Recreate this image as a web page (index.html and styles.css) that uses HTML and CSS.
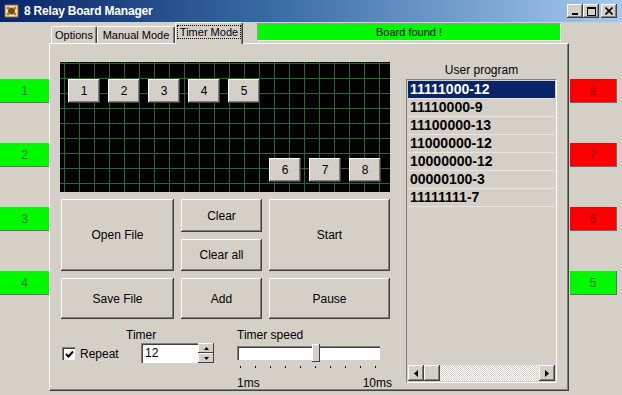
FILE: index.html
```html
<!DOCTYPE html>
<html lang="en">
<head>
    <meta charset="UTF-8">
    <title>8 Relay Board Manager</title>
    <link rel="stylesheet" href="styles.css">
</head>
<body>
<div class="window">
    <div class="titlebar">
        <svg class="app-icon" width="16" height="16" viewBox="0 0 16 16">
            <rect x="1" y="2" width="13" height="12" fill="#f4e6b8" stroke="#8a6a2a"/>
            <circle cx="7.5" cy="8" r="3.5" fill="#7a4a14"/>
            <circle cx="4" cy="5" r="1.5" fill="#b07a30"/>
            <circle cx="11" cy="5" r="1.5" fill="#b07a30"/>
            <circle cx="4" cy="11" r="1.5" fill="#b07a30"/>
            <circle cx="11" cy="11" r="1.5" fill="#b07a30"/>
        </svg>
        <span class="title">8 Relay Board Manager</span>
        <div class="caption-btns">
            <div class="cap"><svg width="8" height="8" viewBox="0 0 8 8"><rect x="1" y="6" width="6" height="2" fill="#000"/></svg></div>
            <div class="cap"><svg width="9" height="9" viewBox="0 0 9 9"><rect x="0.5" y="0.5" width="8" height="8" fill="none" stroke="#000"/><rect x="0" y="0" width="9" height="2" fill="#000"/></svg></div>
            <div class="cap close"><svg width="8" height="8" viewBox="0 0 8 8"><path d="M0.5 0.5 L7.5 7.5 M7.5 0.5 L0.5 7.5" stroke="#000" stroke-width="1.6"/></svg></div>
        </div>
    </div>

    <div class="main">
        <div class="relays left">
            <div class="relay on">1</div>
            <div class="relay on">2</div>
            <div class="relay on">3</div>
            <div class="relay on">4</div>
        </div>

        <div class="tabctl">
            <div class="tabrow">
                <div class="tab t-options">Options</div>
                <div class="tab t-manual">Manual Mode</div>
                <div class="tab active"><span class="focus">Timer Mode</span></div>
                <div class="status">Board found !</div>
            </div>
            <div class="panel">
                <div class="work">
                    <div class="board">
                        <div class="board-row">
                            <div class="btn bbtn">1</div>
                            <div class="btn bbtn">2</div>
                            <div class="btn bbtn">3</div>
                            <div class="btn bbtn">4</div>
                            <div class="btn bbtn">5</div>
                        </div>
                        <div class="board-row end">
                            <div class="btn bbtn">6</div>
                            <div class="btn bbtn">7</div>
                            <div class="btn bbtn">8</div>
                        </div>
                    </div>

                    <div class="actions">
                        <div class="btn open">Open File</div>
                        <div class="btn">Clear</div>
                        <div class="btn start">Start</div>
                        <div class="btn">Clear all</div>
                        <div class="btn">Save File</div>
                        <div class="btn">Add</div>
                        <div class="btn">Pause</div>
                    </div>

                    <div class="timer">
                        <div class="repeat">
                            <div class="check">
                                <svg width="9" height="9" viewBox="0 0 9 9"><path d="M1 4 L3.5 6.5 L8 1.5" fill="none" stroke="#000" stroke-width="2"/></svg>
                            </div>
                            <span>Repeat</span>
                        </div>
                        <div class="timer-val">
                            <div class="lbl">Timer</div>
                            <div class="spin">
                                <div class="spin-input">12</div>
                                <div class="spin-btns">
                                    <div class="sbtn"><svg width="5" height="3" viewBox="0 0 5 3"><path d="M0 3 L2.5 0 L5 3Z" fill="#000"/></svg></div>
                                    <div class="sbtn"><svg width="5" height="3" viewBox="0 0 5 3"><path d="M0 0 L2.5 3 L5 0Z" fill="#000"/></svg></div>
                                </div>
                            </div>
                        </div>
                        <div class="speed">
                            <div class="lbl">Timer speed</div>
                            <div class="slider">
                                <div class="track"></div>
                                <div class="thumb"></div>
                            </div>
                            <div class="ticks"></div>
                            <div class="scale"><span>1ms</span><span>10ms</span></div>
                        </div>
                    </div>
                </div>

                <div class="program">
                    <div class="prog-label">User program</div>
                    <div class="listbox">
                        <div class="items">
                            <div class="item selected">11111000-12</div>
                            <div class="item">11110000-9</div>
                            <div class="item">11100000-13</div>
                            <div class="item">11000000-12</div>
                            <div class="item">10000000-12</div>
                            <div class="item">00000100-3</div>
                            <div class="item">11111111-7</div>
                        </div>
                        <div class="hscroll">
                            <div class="sb-btn"><svg width="4" height="7" viewBox="0 0 4 7"><path d="M4 0 L0 3.5 L4 7Z" fill="#000"/></svg></div>
                            <div class="sb-btn thumb-h"></div>
                            <div class="sb-track"></div>
                            <div class="sb-btn"><svg width="4" height="7" viewBox="0 0 4 7"><path d="M0 0 L4 3.5 L0 7Z" fill="#000"/></svg></div>
                        </div>
                    </div>
                </div>
            </div>
        </div>

        <div class="relays right">
            <div class="relay off">8</div>
            <div class="relay off">7</div>
            <div class="relay off">6</div>
            <div class="relay on">5</div>
        </div>
    </div>
</div>
</body>
</html>
```

FILE: styles.css
```css
body {
    margin: 0;
    background-color: #d4d0c8;
    font-family: "Liberation Sans", Arial, sans-serif;
    font-size: 11px;
    color: #000;
}
.window {
    width: 622px;
    height: 395px;
    overflow: hidden;
    background-color: #d4d0c8;
}
.titlebar {
    height: 22px;
    display: flex;
    align-items: center;
    padding-left: 4px;
    background: linear-gradient(to right, #0a246a, #3a6ea5 45%, #a6caf0);
}
.app-icon {
    flex: none;
}
.title {
    margin-left: 4px;
    color: #fff;
    font-weight: bold;
    font-size: 12px;
    letter-spacing: -0.2px;
}
.caption-btns {
    margin-left: auto;
    margin-right: 5px;
    display: flex;
}
.cap {
    width: 16px;
    height: 14px;
    display: flex;
    align-items: center;
    justify-content: center;
    background-color: #d4d0c8;
    box-shadow: inset -1px -1px #404040, inset 1px 1px #fff, inset -2px -2px #808080;
}
.cap.close {
    margin-left: 2px;
}

.main {
    display: flex;
    height: 373px;
}
.relays {
    display: flex;
    flex-direction: column;
    gap: 40px;
    padding-top: 57px;
}
.relays.left {
    width: 49px;
}
.relays.right {
    width: 52px;
    padding-left: 1px;
}
.relay {
    height: 24px;
    line-height: 24px;
    text-align: center;
    font-size: 12px;
    box-sizing: border-box;
    border-right: 1px solid #6c6c6c;
    border-bottom: 1px solid #6c6c6c;
}
.relays.left .relay {
    width: 50px;
}
.relays.right .relay {
    width: 47px;
}
.relay.on {
    background-color: #00f800;
    color: #1b7a1b;
}
.relay.off {
    background-color: #fa0000;
    color: #9a0000;
}

.tabctl {
    width: 520px;
    position: relative;
}
.tabrow {
    height: 21px;
    display: flex;
    align-items: flex-end;
    padding-left: 2px;
}
.tab {
    height: 17px;
    box-sizing: border-box;
    padding-top: 2px;
    text-align: center;
    border-top: 1px solid #fff;
    border-left: 1px solid #fff;
    border-right: 1px solid #404040;
    box-shadow: inset -1px 0 #808080;
    border-radius: 2px 2px 0 0;
}
.t-options {
    width: 46px;
}
.t-manual {
    width: 78px;
}
.tab.active {
    width: 68px;
    height: 22px;
    margin-bottom: -1px;
    padding-top: 3px;
    position: relative;
    z-index: 1;
    background-color: #d4d0c8;
}
.focus {
    border: 1px dotted #000;
    padding: 0 2px;
}
.status {
    align-self: flex-start;
    margin-top: 1px;
    margin-left: 14px;
    width: 304px;
    height: 18px;
    box-sizing: border-box;
    line-height: 16px;
    text-align: center;
    background-color: #00f800;
    border-top: 1px solid #9a9a9a;
    border-left: 1px solid #9a9a9a;
    border-bottom: 1px solid #fff;
    border-right: 1px solid #fff;
}
.panel {
    height: 348px;
    box-sizing: border-box;
    display: flex;
    border-top: 1px solid #fff;
    border-left: 1px solid #fff;
    border-right: 1px solid #404040;
    border-bottom: 1px solid #404040;
    box-shadow: inset -1px -1px #808080;
}

.work {
    width: 340px;
    box-sizing: border-box;
    padding-left: 10px;
    padding-top: 18px;
}
.board {
    width: 330px;
    height: 130px;
    box-sizing: border-box;
    padding: 17px 9px 10px 8px;
    display: flex;
    flex-direction: column;
    justify-content: space-between;
    background-color: #000;
    background-image:
        linear-gradient(to right, #256a2c 1px, transparent 1px),
        linear-gradient(to bottom, #256a2c 1px, transparent 1px);
    background-size: 15px 15px;
    background-position: 4px 1px;
}
.board-row {
    display: flex;
    gap: 8px;
}
.board-row.end {
    justify-content: flex-end;
}
.btn {
    box-sizing: border-box;
    display: flex;
    align-items: center;
    justify-content: center;
    background-color: #d4d0c8;
    box-shadow: inset -1px -1px #404040, inset 1px 1px #fff, inset -2px -2px #808080;
}
.bbtn {
    width: 32px;
    height: 24px;
    font-size: 12px;
}
.actions {
    margin-top: 7px;
    margin-left: 1px;
    display: grid;
    grid-template-columns: 113px 81px 121px;
    grid-template-rows: 33px 32px 41px;
    column-gap: 7px;
    row-gap: 7px;
    font-size: 12px;
}
.open,
.start {
    grid-row: span 2;
}

.timer {
    display: grid;
    grid-template-columns: 64px 111px auto;
    padding-top: 10px;
    padding-left: 2px;
}
.repeat {
    display: flex;
    align-items: center;
    padding-top: 18px;
    height: 13px;
    font-size: 12px;
}
.check {
    width: 13px;
    height: 13px;
    box-sizing: border-box;
    display: flex;
    align-items: center;
    justify-content: center;
    background-color: #fff;
    border-top: 1px solid #808080;
    border-left: 1px solid #808080;
    box-shadow: inset 1px 1px #404040;
    margin-right: 5px;
}
.lbl {
    height: 12px;
    line-height: 12px;
    font-size: 12px;
}
.spin {
    display: flex;
    margin-top: 2px;
    margin-left: 15px;
}
.spin-input {
    width: 57px;
    height: 20px;
    box-sizing: border-box;
    padding-left: 3px;
    line-height: 19px;
    font-size: 12px;
    background-color: #fff;
    border-top: 1px solid #808080;
    border-left: 1px solid #808080;
    box-shadow: inset 1px 1px #404040;
}
.spin-btns {
    display: flex;
    flex-direction: column;
}
.sbtn {
    width: 16px;
    height: 10px;
    display: flex;
    align-items: center;
    justify-content: center;
    background-color: #d4d0c8;
    box-shadow: inset -1px -1px #404040, inset 1px 1px #fff;
}
.speed {
    width: 160px;
}
.slider {
    position: relative;
    width: 143px;
    margin-top: 5px;
    height: 14px;
}
.track {
    height: 14px;
    box-sizing: border-box;
    background-color: #fff;
    border-top: 1px solid #808080;
    border-left: 1px solid #808080;
    box-shadow: inset 1px 1px #404040;
}
.thumb {
    position: absolute;
    left: 75px;
    top: -2px;
    width: 8px;
    height: 18px;
    background-color: #d4d0c8;
    box-shadow: inset -1px -1px #404040, inset 1px 1px #fff;
}
.ticks {
    margin-top: 6px;
    margin-left: 3px;
    width: 137px;
    height: 2px;
    background-image: repeating-linear-gradient(to right, #000 0 1px, transparent 1px 15px);
}
.scale {
    display: flex;
    justify-content: space-between;
    width: 155px;
    margin-top: 8px;
    font-size: 12px;
}

.program {
    width: 151px;
    margin-left: 16px;
}
.prog-label {
    padding-top: 20px;
    height: 12px;
    line-height: 12px;
    text-align: center;
    font-size: 12px;
}
.listbox {
    margin-top: 3px;
    height: 304px;
    box-sizing: border-box;
    display: flex;
    flex-direction: column;
    padding: 1px;
    border-top: 1px solid #808080;
    border-left: 1px solid #808080;
    border-right: 1px solid #fff;
    border-bottom: 1px solid #fff;
}
.items {
    flex: 1;
}
.item {
    height: 18px;
    box-sizing: border-box;
    padding-left: 2px;
    line-height: 17px;
    font-size: 14px;
    font-weight: bold;
    border-bottom: 1px solid #e6e4de;
}
.item.selected {
    background-color: #0a246a;
    color: #fff;
}
.hscroll {
    display: flex;
    height: 16px;
}
.sb-btn {
    width: 16px;
    height: 16px;
    display: flex;
    align-items: center;
    justify-content: center;
    background-color: #d4d0c8;
    box-shadow: inset -1px -1px #404040, inset 1px 1px #fff, inset -2px -2px #808080;
}
.sb-track {
    flex: 1;
    background-color: #fff;
    background-image: repeating-conic-gradient(#d4d0c8 0 25%, #fff 0 50%);
    background-size: 2px 2px;
}
```
